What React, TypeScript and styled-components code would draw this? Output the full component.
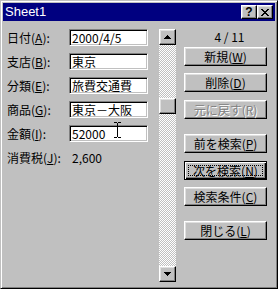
import React from "react";
import styled, { createGlobalStyle, css } from "styled-components";

const Global = createGlobalStyle`
  html, body { margin: 0; padding: 0; background: #c0c0c0; }
  body { font-family: "Noto Sans CJK JP", "Liberation Sans", sans-serif; font-size: 12px; }
  * { box-sizing: border-box; }
`;

const raised = css`
  background: #c0c0c0;
  border: 1px solid;
  border-color: #fff #000 #000 #fff;
  box-shadow: inset -1px -1px #808080, inset 1px 1px #dfdfdf;
`;

const Window = styled.div`
  position: relative;
  width: 278px;
  height: 289px;
  background: #c0c0c0;
  border: 1px solid;
  border-color: #c0c0c0 #000 #000 #c0c0c0;
  box-shadow: inset 1px 1px #fff, inset -1px -1px #808080;
  padding: 2px;
  display: flex;
  flex-direction: column;
  overflow: hidden;
`;

const TitleBar = styled.div`
  height: 18px;
  background: #000080;
  display: flex;
  align-items: center;
  padding: 0 2px 0 2px;
  color: #fff;
  line-height: 18px;
`;

const TitleText = styled.span`
  flex: 1;
  font-family: "Liberation Sans", sans-serif;
  font-size: 13px;
`;

const CapButton = styled.div`
  ${raised};
  width: 16px;
  height: 14px;
  display: flex;
  align-items: center;
  justify-content: center;
  color: #000;
  font-family: "Liberation Sans", sans-serif;
  font-weight: bold;
  font-size: 12px;
  line-height: 12px;
`;

const Body = styled.div`
  flex: 1;
  display: flex;
  padding: 8px 0 0 4px;
`;

const LeftCol = styled.div`
  width: 152px;
  display: flex;
  flex-direction: column;
  gap: 7px;
`;

const Row = styled.div`
  height: 17px;
  display: grid;
  grid-template-columns: 62px 79px;
  align-items: center;
`;

const Label = styled.span`
  color: #000;
  white-space: nowrap;
  line-height: 17px;
`;

const Field = styled.div`
  height: 17px;
  background: #fff;
  border: 1px solid;
  border-color: #808080 #fff #fff #808080;
  box-shadow: inset 1px 1px #000, inset -1px -1px #c0c0c0;
  padding: 0 0 0 2px;
  line-height: 15px;
  color: #000;
  white-space: nowrap;
  overflow: hidden;
`;

const Value = styled.span`
  padding-left: 3px;
  color: #000;
  line-height: 17px;
`;

const ScrollBar = styled.div`
  width: 17px;
  height: 253px;
  display: flex;
  flex-direction: column;
  background-color: #c0c0c0;
  background-image: conic-gradient(#c0c0c0 90deg, #fff 90deg 180deg, #c0c0c0 180deg 270deg, #fff 270deg);
  background-size: 2px 2px;
`;

const ScrollBtn = styled.div<{ $mt?: number }>`
  ${raised};
  width: 17px;
  height: 16px;
  flex: none;
  display: flex;
  align-items: center;
  justify-content: center;
  margin-top: ${(p) => p.$mt ?? 0}px;
`;

const Spacer = styled.div`
  flex: 1;
`;

const RightCol = styled.div`
  margin-left: 8px;
  width: 83px;
  display: flex;
  flex-direction: column;
`;

const Counter = styled.div`
  height: 18px;
  line-height: 16px;
  text-align: center;
  padding-left: 8px;
  color: #000;
`;

const Button = styled.div<{ $mt: number; $disabled?: boolean; $default?: boolean }>`
  position: relative;
  ${raised};
  height: 19px;
  margin-top: ${(p) => p.$mt}px;
  display: flex;
  align-items: center;
  justify-content: center;
  color: ${(p) => (p.$disabled ? "#808080" : "#000")};
  text-shadow: ${(p) => (p.$disabled ? "1px 1px #fff" : "none")};
  line-height: 17px;
  white-space: nowrap;
  ${(p) =>
    p.$default &&
    css`
      border-color: #000;
      box-shadow: inset 1px 1px #fff, inset -1px -1px #000, inset -2px -2px #808080;
      &::after {
        content: "";
        position: absolute;
        inset: 3px;
        border: 1px dotted #000;
      }
    `}
`;

const Cursor = styled.svg`
  position: absolute;
  left: 113px;
  top: 121px;
`;

const Up = () => (
  <svg width="7" height="4" viewBox="0 0 7 4">
    <path d="M3 0h1v1h1v1h1v1h1v1H0V3h1V2h1V1h1z" fill="#000" />
  </svg>
);
const Down = () => (
  <svg width="7" height="4" viewBox="0 0 7 4">
    <path d="M0 0h7v1H6v1H5v1H4v1H3V3H2V2H1V1H0z" fill="#000" />
  </svg>
);

const Close = () => (
  <svg width="8" height="7" viewBox="0 0 8 7">
    <path d="M0 0h2v1h1v1h2V1h1V0h2v1H7v1H6v1H5v1h1v1h1v1h1v1H6V6H5V5H3v1H2v1H0V6h1V5h1V4h1V3H2V2H1V1H0z" fill="#000" />
  </svg>
);

const fields: [string, string, string][] = [
  ["日付", "A", "2000/4/5"],
  ["支店", "B", "東京"],
  ["分類", "E", "旅費交通費"],
  ["商品", "G", "東京－大阪"],
  ["金額", "I", "52000"],
];

export default function App() {
  return (
    <>
      <Global />
      <Window>
        <TitleBar>
          <TitleText>Sheet1</TitleText>
          <CapButton>?</CapButton>
          <CapButton>
            <Close />
          </CapButton>
        </TitleBar>
        <Body>
          <LeftCol>
            {fields.map(([l, k, v]) => (
              <Row key={k}>
                <Label>
                  {l}(<u>{k}</u>):
                </Label>
                <Field>{v}</Field>
              </Row>
            ))}
            <Row>
              <Label>
                消費税(<u>J</u>):
              </Label>
              <Value>2,600</Value>
            </Row>
          </LeftCol>
          <ScrollBar>
            <ScrollBtn>
              <Up />
            </ScrollBtn>
            <ScrollBtn $mt={53} />
            <Spacer />
            <ScrollBtn>
              <Down />
            </ScrollBtn>
          </ScrollBar>
          <RightCol>
            <Counter>4 / 11</Counter>
            <Button $mt={0}>
              新規(<u>W</u>)
            </Button>
            <Button $mt={7}>
              削除(<u>D</u>)
            </Button>
            <Button $mt={8} $disabled>
              元に戻す(R)
            </Button>
            <Button $mt={15}>
              前を検索(<u>P</u>)
            </Button>
            <Button $mt={8} $default>
              次を検索(<u>N</u>)
            </Button>
            <Button $mt={7}>
              検索条件(<u>C</u>)
            </Button>
            <Button $mt={15}>
              閉じる(<u>L</u>)
            </Button>
          </RightCol>
        </Body>
        <Cursor width="7" height="16" viewBox="0 0 7 16">
          <path d="M0 0h3v1h1V0h3v1H4v14h3v1H4v-1H3v1H0v-1h3V1H0z" fill="#000" />
        </Cursor>
      </Window>
    </>
  );
}
